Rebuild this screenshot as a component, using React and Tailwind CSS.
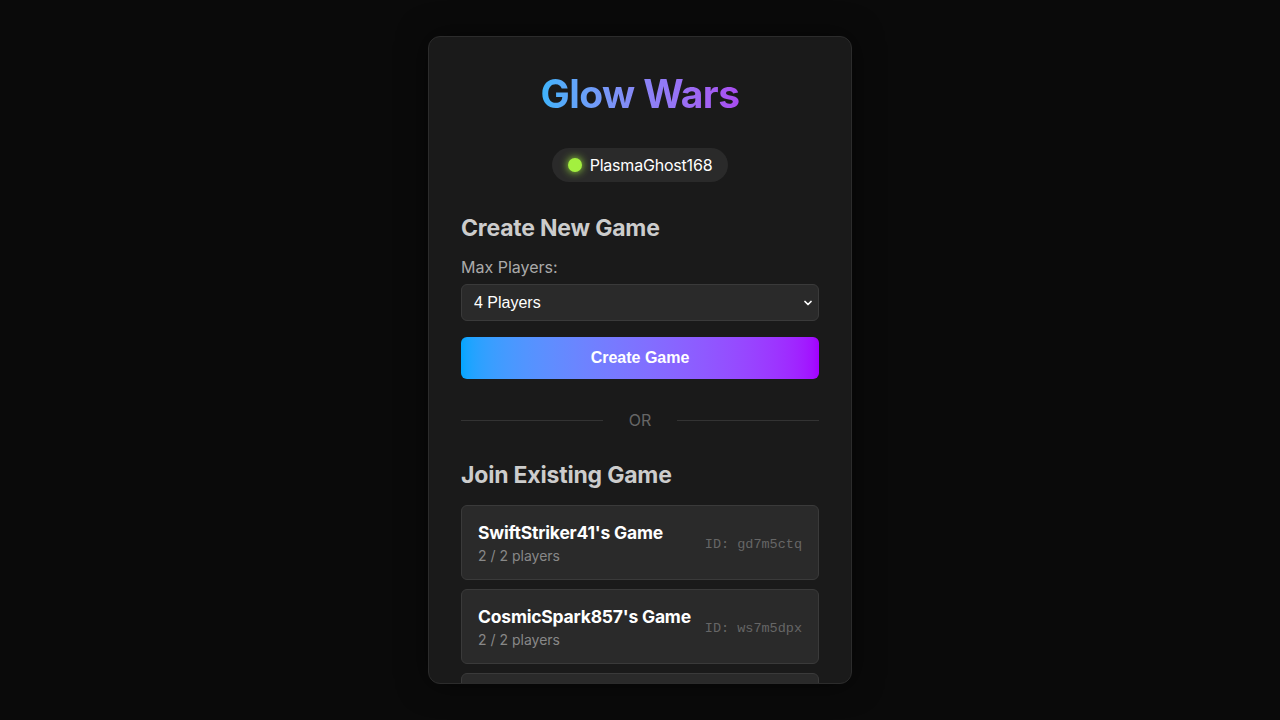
import React from "react";
import { ChevronDown } from "lucide-react";

const games = [
  { host: "SwiftStriker41", players: 2, max: 2, id: "gd7m5ctq" },
  { host: "CosmicSpark857", players: 2, max: 2, id: "ws7m5dpx" },
  { host: "NeonRider302", players: 1, max: 4, id: "kq2m9fza" },
];

export default function App() {
  return (
    <div className="min-h-screen bg-[#0a0a0a] flex items-center justify-center font-['Inter','Noto_Sans',sans-serif]">
      <div className="w-[424px] h-[648px] overflow-hidden rounded-xl border border-[#2c2c2c] bg-[#1a1a1a] shadow-[0_0_30px_rgba(0,0,0,0.5)] p-8">
        <h1 className="text-center text-[39px] leading-[48px] font-bold tracking-[-0.6px] mt-px">
          <span className="bg-gradient-to-r from-[#3cb3fb] to-[#a94cf1] bg-clip-text text-transparent">
            Glow Wars
          </span>
        </h1>

        <div className="flex justify-center mt-[30px]">
          <div className="flex items-center gap-[8px] h-[34px] px-[16px] rounded-full bg-[#2a2a2a]">
            <span className="w-[14px] h-[14px] rounded-full bg-[#a3f03f] shadow-[0_0_8px_#a3f03f]" />
            <span className="text-white text-base leading-[19px] tracking-[-0.2px]">PlasmaGhost168</span>
          </div>
        </div>

        <h2 className="mt-[32px] text-[23px] leading-[29px] font-bold tracking-[-0.2px] text-[#cccccc]">Create New Game</h2>
        <label className="block mt-[15px] text-base leading-[19px] text-[#aaaaaa]">Max Players:</label>
        <div className="relative mt-[7px]">
          <select
            defaultValue="4"
            className="w-full h-[37px] appearance-none rounded-md border border-[#3a3a3a] bg-[#2a2a2a] pl-3 text-white text-base font-['Liberation_Sans',Arial,sans-serif] outline-none"
          >
            <option value="2">2 Players</option>
            <option value="3">3 Players</option>
            <option value="4">4 Players</option>
          </select>
          <ChevronDown className="absolute right-[5px] top-[13px] w-3 h-3 text-white pointer-events-none" strokeWidth={3.5} />
        </div>
        <button className="mt-4 w-full h-[42px] rounded-md bg-gradient-to-r from-[#00a6ff] to-[#a300ff] text-white text-base font-bold font-['Liberation_Sans',Arial,sans-serif]">
          Create Game
        </button>

        <div className="flex items-center mt-[32px] mb-[31px]">
          <div className="flex-1 h-px bg-[#333333]" />
          <span className="px-[26px] text-base leading-[19px] text-[#666666]">OR</span>
          <div className="flex-1 h-px bg-[#333333]" />
        </div>

        <h2 className="text-[23px] leading-[29px] font-bold tracking-[-0.2px] text-[#cccccc]">Join Existing Game</h2>
        <div className="mt-[15px] flex flex-col gap-[9px]">
          {games.map((g) => (
            <div
              key={g.id}
              className="flex items-center justify-between rounded-md border border-[#3a3a3a] bg-[#2a2a2a] px-4 pt-[16px] pb-[15px]"
            >
              <div>
                <div className="text-white text-[17.5px] leading-[22px] font-bold tracking-[-0.2px]">{g.host}'s Game</div>
                <div className="mt-[3px] text-sm leading-[17px] text-[#888888]">
                  {g.players} / {g.max} players
                </div>
              </div>
              <div className="mt-[5px] text-[13.5px] text-[#666666] font-['Liberation_Mono','Courier_New',monospace]">
                ID: {g.id}
              </div>
            </div>
          ))}
        </div>
      </div>
    </div>
  );
}
